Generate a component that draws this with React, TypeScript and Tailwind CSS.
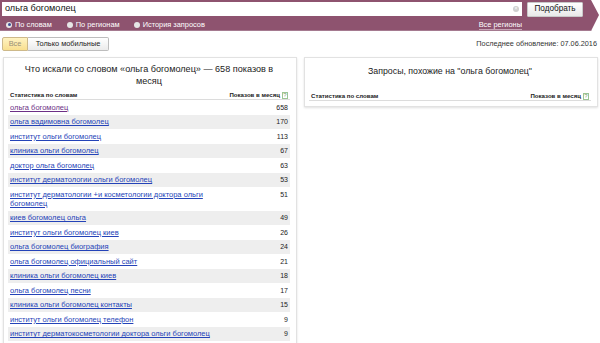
import React from "react";

const rows: [string, number][] = [
  ["ольга богомолец", 658],
  ["ольга вадимовна богомолец", 170],
  ["институт ольги богомолец", 113],
  ["клиника ольги богомолец", 67],
  ["доктор ольга богомолец", 63],
  ["институт дерматологии ольги богомолец", 53],
  ["институт дерматологии +и косметологии доктора ольги богомолец", 51],
  ["киев богомолец ольга", 49],
  ["институт ольги богомолец киев", 26],
  ["ольга богомолец биография", 24],
  ["ольга богомолец официальный сайт", 21],
  ["клиника ольги богомолец киев", 18],
  ["ольга богомолец песни", 17],
  ["клиника ольги богомолец контакты", 15],
  ["институт ольги богомолец телефон", 9],
  ["институт дерматокосметологии доктора ольги богомолец", 9],
];

function Radio({ on }: { on?: boolean }) {
  return (
    <span className="w-[6px] h-[6px] rounded-full bg-[#e6e6e6] flex items-center justify-center shrink-0">
      {on && <span className="w-[3px] h-[3px] rounded-full bg-[#3d4f95]" />}
    </span>
  );
}

function Help() {
  return (
    <span className="ml-[2px] w-[6px] h-[7px] border border-[#9cc595] text-[6px] leading-[5px] text-[#7aa072] font-normal flex items-center justify-center">
      ?
    </span>
  );
}

function TableHead() {
  return (
    <div className="flex justify-between items-end border-b border-[#dcdcdc] pl-[2px] pr-[2px] leading-[8px] text-[6.1px] font-bold text-[#222]">
      <span>Статистика по словам</span>
      <span className="flex items-center">
        Показов в месяц
        <Help />
      </span>
    </div>
  );
}

export default function App() {
  return (
    <div className="w-[600px] h-[343px] overflow-hidden bg-white font-['Liberation_Sans',Arial,sans-serif]">
      <div className="h-[31px] bg-[#8e536f] [clip-path:polygon(0_0,591px_0,599px_15px,591px_31px,0_31px)] border-b border-[#a57a90]">
        <div className="flex pt-[1.5px] pl-[2px]">
          <div className="relative w-[520px] h-[14px] bg-white flex items-center pl-[3px] text-[9.1px] text-[#111]">
            ольга богомолец
            <span className="absolute left-[511px] top-[4px] w-[6px] h-[6px] rounded-full bg-[#cfcfcf] flex items-center justify-center text-white text-[5px] leading-none">
              ×
            </span>
          </div>
          <div className="ml-[5px] w-[56px] h-[15px] bg-gradient-to-b from-white to-[#e9e9e9] border border-[#c9c9c9] rounded-[1px] flex items-center justify-center text-[8.2px] text-[#111]">
            Подобрать
          </div>
        </div>
        <div className="flex items-center h-[12px] mt-[2.5px] text-[7.4px] text-white">
          <div className="flex items-center pl-[6px] gap-[3px]">
            <Radio on />
            <span>По словам</span>
          </div>
          <div className="flex items-center ml-[15px] gap-[3px]">
            <Radio />
            <span>По регионам</span>
          </div>
          <div className="flex items-center ml-[14px] gap-[3px]">
            <Radio />
            <span>История запросов</span>
          </div>
          <span className="ml-auto mr-[78px] leading-[9px] border-b border-[#c6a2b4]">Все регионы</span>
        </div>
      </div>

      <div className="flex items-center justify-between mt-[6px] pl-[2px] pr-[3px]">
        <div className="flex h-[14px] text-[7.4px]">
          <div className="w-[26px] flex items-center justify-center rounded-l-[2px] border border-[#cdb98a] bg-gradient-to-b from-[#fff3c2] to-[#f9df8f] text-[#9a9078]">
            Все
          </div>
          <div className="w-[81px] flex items-center justify-center rounded-r-[2px] border border-l-0 border-[#bdbdbd] bg-gradient-to-b from-white to-[#ebebeb] text-[#222]">
            Только мобильные
          </div>
        </div>
        <span className="text-[7.3px] text-[#333]">Последнее обновление: 07.06.2016</span>
      </div>

      <div className="flex items-start gap-[7px] mt-[6px] pl-[3px]">
        <div className="w-[294px] h-[300px] border border-[#e2e2e2] shadow-[0_1px_2px_rgba(0,0,0,0.12)] pl-[4px] pr-[6px] pt-[5px]">
          <div className="h-[27px] px-[8px] text-center text-[9.1px] leading-[12px] text-[#222]">
            Что искали со словом «ольга богомолец» — 658 показов в месяц
          </div>
          <div className="mt-[1px]">
            <TableHead />
          </div>
          {rows.map(([q, n], i) => (
            <div
              key={i}
              className={`flex items-start justify-between py-[2.75px] pl-[2px] pr-[2px] leading-[9px] ${
                i % 2 === 1 ? "bg-[#eeeeee]" : ""
              }`}
            >
              <span
                className={`w-[215px] text-[7.5px] underline ${
                  i === 0 ? "text-[#6d2f86]" : "text-[#2443b8]"
                }`}
              >
                {q}
              </span>
              <span className="text-[7px] text-[#222]">{n}</span>
            </div>
          ))}
        </div>

        <div className="w-[294px] border border-[#e2e2e2] shadow-[0_1px_2px_rgba(0,0,0,0.12)] pl-[4px] pr-[6px] pt-[7px] pb-[5px]">
          <div className="h-[27px] text-center text-[8.8px] leading-[12px] text-[#222]">
            Запросы, похожие на "ольга богомолец"
          </div>
          <TableHead />
        </div>
      </div>
    </div>
  );
}
